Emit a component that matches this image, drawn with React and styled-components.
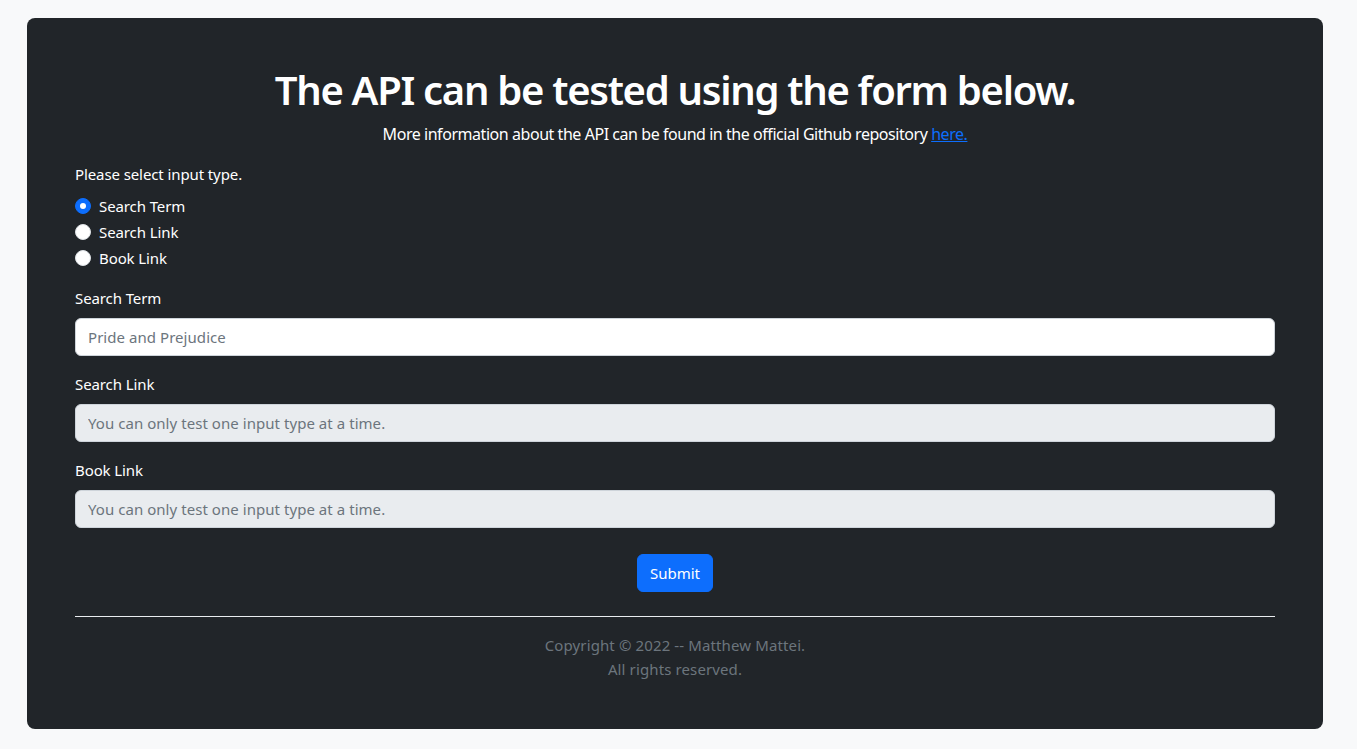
import React, { useState } from 'react';
import styled, { createGlobalStyle } from 'styled-components';

// --- Global ---
const GlobalStyle = createGlobalStyle`
    * { box-sizing: border-box; }
    body {
        margin: 0;
        background-color: #f8f9fa;
        font-family: 'Noto Sans', 'Open Sans', sans-serif;
        font-size: 16px;
        line-height: 24px;
        color: #212529;
    }
`;

// --- Styled Components ---
const Page = styled.div`
    padding: 18px 34px 20px 27px;
`;

const Card = styled.main`
    background-color: #212529;
    border-radius: 8px;
    padding: 48px;
    color: #fff;
`;

const Title = styled.h1`
    margin: 0 0 8px;
    font-size: 40px;
    line-height: 48px;
    font-weight: 600;
    text-align: center;
    letter-spacing: -1.3px;
`;

const Lead = styled.p`
    margin: 0 0 16px;
    text-align: center;
    font-size: 16px;
    line-height: 24px;
    letter-spacing: -0.45px;

    a {
        color: #0d6efd;
        text-decoration: underline;
    }
`;

const Form = styled.form`
    display: flex;
    flex-direction: column;
`;

const Group = styled.div`
    margin-bottom: 16px;
`;

const Label = styled.label`
    display: block;
    margin-bottom: 8px;
    font-size: 15px;
    line-height: 24px;
    letter-spacing: -0.1px;
`;

const Check = styled.label`
    display: flex;
    align-items: center;
    gap: 8px;
    height: 24px;
    margin-bottom: 2px;
    font-size: 15px;
    line-height: 24px;
    letter-spacing: -0.1px;
    cursor: pointer;

    &:last-child {
        margin-bottom: 0;
    }
`;

const Radio = styled.span`
    width: 16px;
    height: 16px;
    border-radius: 50%;
    flex-shrink: 0;
    background-color: ${props => (props.checked ? '#0d6efd' : '#fff')};
    border: 1px solid ${props => (props.checked ? '#0d6efd' : '#dee2e6')};
    position: relative;

    &::after {
        content: '';
        display: ${props => (props.checked ? 'block' : 'none')};
        position: absolute;
        left: 4px;
        top: 4px;
        width: 6px;
        height: 6px;
        border-radius: 50%;
        background: #fff;
    }
`;

const Input = styled.input`
    display: block;
    width: 100%;
    height: 38px;
    padding: 6px 12px;
    font-family: inherit;
    font-size: 15px;
    letter-spacing: 0.05px;
    color: #212529;
    background-color: ${props => (props.disabled ? '#e9ecef' : '#fff')};
    border: 1px solid #ced4da;
    border-radius: 6px;
    outline: none;

    &::placeholder {
        color: #6c757d;
        opacity: 1;
    }
`;

const Actions = styled.div`
    display: flex;
    justify-content: center;
    margin-top: 10px;
    margin-bottom: 24px;
`;

const Button = styled.button`
    height: 38px;
    padding: 0 12px;
    font-family: inherit;
    font-size: 15px;
    letter-spacing: 0;
    color: #fff;
    background-color: #0d6efd;
    border: 1px solid #0d6efd;
    border-radius: 6px;
    cursor: pointer;
`;

const Rule = styled.hr`
    margin: 0 0 16px;
    border: 0;
    border-top: 1px solid #e9ecef;
`;

const Footer = styled.footer`
    text-align: center;
    color: #6c757d;
    font-size: 15px;
    line-height: 24px;
    letter-spacing: 0.12px;
`;

const fields = [
    { key: 'term', label: 'Search Term', placeholder: 'Pride and Prejudice' },
    { key: 'search', label: 'Search Link', placeholder: 'Pride and Prejudice' },
    { key: 'book', label: 'Book Link', placeholder: 'Pride and Prejudice' },
];

const App = () => {
    const [type, setType] = useState('term');

    return (
        <Page>
            <GlobalStyle />
            <Card>
                <Title>The API can be tested using the form below.</Title>
                <Lead>
                    More information about the API can be found in the official Github repository{' '}
                    <a href="#repo">here.</a>
                </Lead>

                <Form onSubmit={e => e.preventDefault()}>
                    <Group>
                        <Label as="div">Please select input type.</Label>
                        {fields.map(f => (
                            <Check key={f.key} onClick={() => setType(f.key)}>
                                <Radio checked={type === f.key} />
                                {f.label}
                            </Check>
                        ))}
                    </Group>

                    {fields.map(f => (
                        <Group key={f.key}>
                            <Label htmlFor={f.key}>{f.label}</Label>
                            <Input
                                id={f.key}
                                type="text"
                                disabled={type !== f.key}
                                placeholder={
                                    type === f.key
                                        ? f.placeholder
                                        : 'You can only test one input type at a time.'
                                }
                            />
                        </Group>
                    ))}

                    <Actions>
                        <Button type="submit">Submit</Button>
                    </Actions>
                </Form>

                <Rule />
                <Footer>
                    Copyright © 2022 -- Matthew Mattei.
                    <br />
                    All rights reserved.
                </Footer>
            </Card>
        </Page>
    );
};

export default App;
